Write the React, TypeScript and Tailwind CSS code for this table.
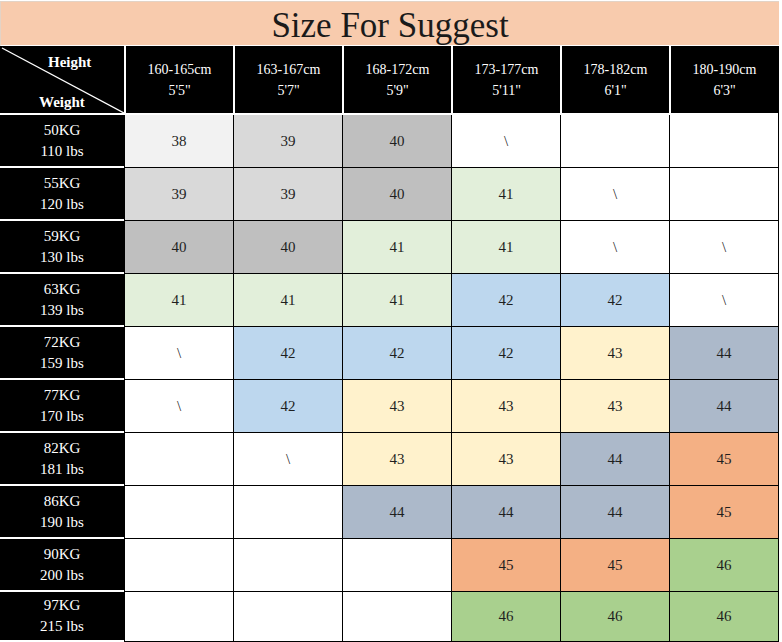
const heights = [
  ["160-165cm", `5'5"`],
  ["163-167cm", `5'7"`],
  ["168-172cm", `5'9"`],
  ["173-177cm", `5'11"`],
  ["178-182cm", `6'1"`],
  ["180-190cm", `6'3"`],
];

const rows: { kg: string; lbs: string; sizes: string[] }[] = [
  { kg: "50KG", lbs: "110 lbs", sizes: ["38", "39", "40", "\\", "", ""] },
  { kg: "55KG", lbs: "120 lbs", sizes: ["39", "39", "40", "41", "\\", ""] },
  { kg: "59KG", lbs: "130 lbs", sizes: ["40", "40", "41", "41", "\\", "\\"] },
  { kg: "63KG", lbs: "139 lbs", sizes: ["41", "41", "41", "42", "42", "\\"] },
  { kg: "72KG", lbs: "159 lbs", sizes: ["\\", "42", "42", "42", "43", "44"] },
  { kg: "77KG", lbs: "170 lbs", sizes: ["\\", "42", "43", "43", "43", "44"] },
  { kg: "82KG", lbs: "181 lbs", sizes: ["", "\\", "43", "43", "44", "45"] },
  { kg: "86KG", lbs: "190 lbs", sizes: ["", "", "44", "44", "44", "45"] },
  { kg: "90KG", lbs: "200 lbs", sizes: ["", "", "", "45", "45", "46"] },
  { kg: "97KG", lbs: "215 lbs", sizes: ["", "", "", "46", "46", "46"] },
];

const sizeBg: Record<string, string> = {
  "38": "bg-[#f2f2f2]",
  "39": "bg-[#d9d9d9]",
  "40": "bg-[#bfbfbf]",
  "41": "bg-[#e2efda]",
  "42": "bg-[#bdd7ee]",
  "43": "bg-[#fff2cc]",
  "44": "bg-[#acb9ca]",
  "45": "bg-[#f4b084]",
  "46": "bg-[#a9d08e]",
};

export default function App() {
  return (
    <div className="w-[782px] h-[642px] overflow-hidden bg-white [font-family:'Liberation_Serif','Times_New_Roman',serif]">
      <div className="w-[779px] pt-px">
        {/* Title */}
        <div className="h-[45px] bg-[#f8cbad] border-t border-l border-[#e3d3c6] border-b border-b-white flex items-center justify-center">
          <h1 className="text-[35px] leading-none text-[#1a1a1a] pt-[3px]">Size For Suggest</h1>
        </div>

        <div className="grid grid-cols-[124px_repeat(6,109px)] border-r border-black">
          {/* Header row */}
          <div className="relative h-[69px] bg-black border-b-2 border-white">
            <svg className="absolute inset-0" width="124" height="67" viewBox="0 0 124 67">
              <line x1="2" y1="2" x2="124" y2="67" stroke="white" strokeWidth="1.3" />
            </svg>
            <span className="absolute left-[48px] top-[5px] text-[15px] font-bold text-white">Height</span>
            <span className="absolute left-[39px] top-[45px] text-[15px] font-bold text-white">Weight</span>
          </div>
          {heights.map(([cm, ft]) => (
            <div
              key={cm}
              className="h-[69px] bg-black border-l-2 border-b-2 border-white flex flex-col items-center justify-center text-[14px] leading-[21px] text-white"
            >
              <span>{cm}</span>
              <span>{ft}</span>
            </div>
          ))}

          {/* Data rows */}
          {rows.map((row, ri) => (
            <div key={row.kg} className="contents">
              <div
                className={`${ri === rows.length - 1 ? "h-[50px]" : "h-[53px]"} bg-black border-b-2 border-white flex flex-col items-center justify-center text-[15px] leading-[21px] text-white`}
              >
                <span>{row.kg}</span>
                <span>{row.lbs}</span>
              </div>
              {row.sizes.map((s, ci) => (
                <div
                  key={ci}
                  className={`${ri === rows.length - 1 ? "h-[50px]" : "h-[53px]"} ${sizeBg[s] ?? "bg-white"} border-l border-b border-black flex items-center justify-center text-[15px] text-[#1f1f1f]`}
                >
                  {s}
                </div>
              ))}
            </div>
          ))}
        </div>
      </div>
    </div>
  );
}
